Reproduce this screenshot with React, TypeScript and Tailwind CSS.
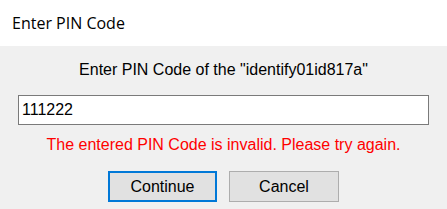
export default function App() {
  return (
    <div className="w-[447px] h-[209px] bg-[#f0f0f0] flex flex-col" style={{ fontFamily: '"Liberation Sans", Arial, sans-serif' }}>
      {/* title bar */}
      <div className="h-[46px] bg-white flex items-center pl-[12px] text-[16px] text-black" style={{ fontFamily: '"Open Sans", "Noto Sans", sans-serif' }}>
        Enter PIN Code
      </div>

      <div className="flex flex-col items-center pt-[15px]">
        <div className="text-[16px] text-black leading-[18px]">Enter PIN Code of the "identify01id817a"</div>

        <div className="mt-[16px] w-[411px] h-[30px] bg-white border border-[#7a7a7a] flex items-center pl-[3px] text-[16px] text-black">
          111222
        </div>

        <div className="mt-[11px] text-[16px] text-[#ff0000] leading-[18px]">
          The entered PIN Code is invalid. Please try again.
        </div>

        <div className="mt-[17px] flex gap-[12px]">
          <button className="w-[109px] h-[31px] bg-[#e1e1e1] border-2 border-[#0078d7] text-[16px] text-black">
            Continue
          </button>
          <button className="w-[110px] h-[31px] bg-[#e1e1e1] border border-[#adadad] text-[16px] text-black">
            Cancel
          </button>
        </div>
      </div>
    </div>
  );
}
